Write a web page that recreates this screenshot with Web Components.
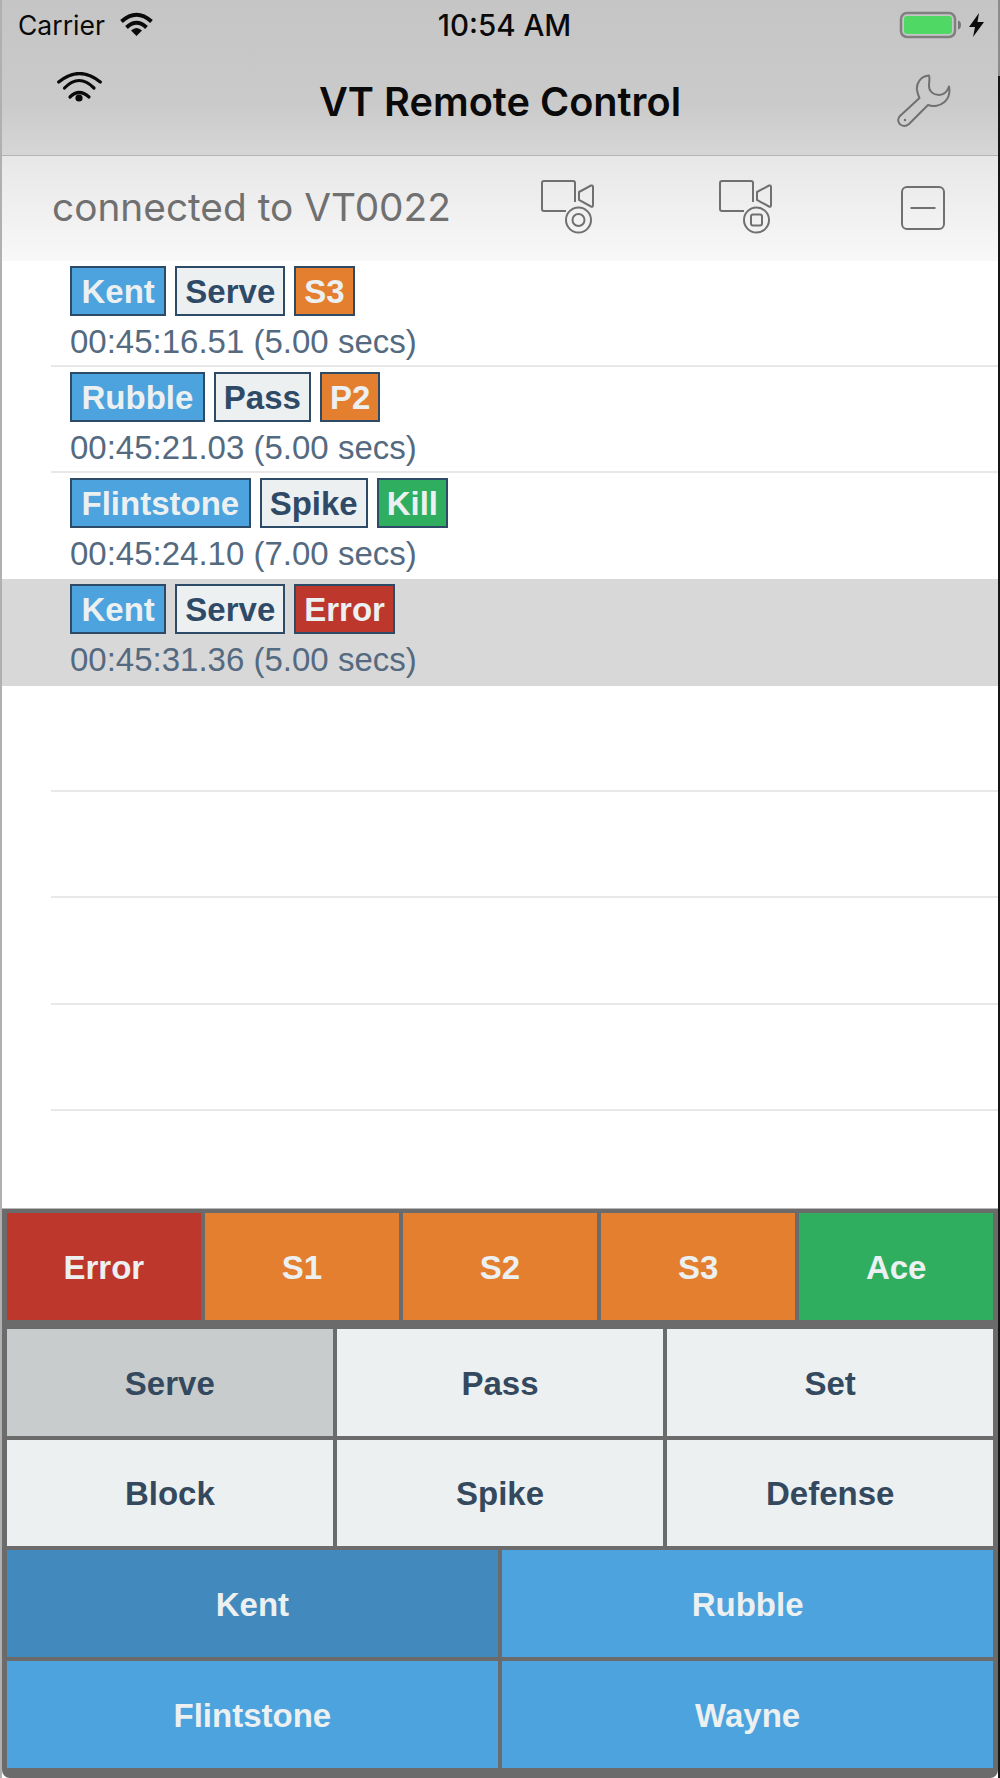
<!DOCTYPE html>
<html>
<head>
<meta charset="utf-8">
<title>VT Remote Control</title>
<style>
	html, body { margin: 0; padding: 0; background: #fff; }
	body { width: 1000px; height: 1778px; overflow: hidden; font-family: "Liberation Sans", sans-serif; }
</style>
</head>
<body>
<vt-app>
	<status-bar slot="top"></status-bar>
	<nav-bar slot="top" title="VT Remote Control"></nav-bar>
	<conn-bar slot="top" label="connected to VT0022"></conn-bar>

	<clip-row slot="list" time="00:45:16.51 (5.00 secs)">
		<tag-chip kind="player">Kent</tag-chip><tag-chip kind="skill">Serve</tag-chip><tag-chip kind="mid">S3</tag-chip>
	</clip-row>
	<clip-row slot="list" time="00:45:21.03 (5.00 secs)">
		<tag-chip kind="player">Rubble</tag-chip><tag-chip kind="skill">Pass</tag-chip><tag-chip kind="mid">P2</tag-chip>
	</clip-row>
	<clip-row slot="list" norule time="00:45:24.10 (7.00 secs)">
		<tag-chip kind="player">Flintstone</tag-chip><tag-chip kind="skill">Spike</tag-chip><tag-chip kind="good">Kill</tag-chip>
	</clip-row>
	<clip-row slot="list" selected norule time="00:45:31.36 (5.00 secs)">
		<tag-chip kind="player">Kent</tag-chip><tag-chip kind="skill">Serve</tag-chip><tag-chip kind="bad">Error</tag-chip>
	</clip-row>
	<clip-row slot="list"></clip-row>
	<clip-row slot="list"></clip-row>
	<clip-row slot="list"></clip-row>
	<clip-row slot="list"></clip-row>

	<key-pad slot="pad">
		<key-row cols="5" class="first">
			<key-button kind="bad">Error</key-button>
			<key-button kind="mid">S1</key-button>
			<key-button kind="mid">S2</key-button>
			<key-button kind="mid">S3</key-button>
			<key-button kind="good">Ace</key-button>
		</key-row>
		<key-row cols="3">
			<key-button kind="skill" active>Serve</key-button>
			<key-button kind="skill">Pass</key-button>
			<key-button kind="skill">Set</key-button>
		</key-row>
		<key-row cols="3">
			<key-button kind="skill">Block</key-button>
			<key-button kind="skill">Spike</key-button>
			<key-button kind="skill">Defense</key-button>
		</key-row>
		<key-row cols="2">
			<key-button kind="player" active>Kent</key-button>
			<key-button kind="player">Rubble</key-button>
		</key-row>
		<key-row cols="2">
			<key-button kind="player">Flintstone</key-button>
			<key-button kind="player">Wayne</key-button>
		</key-row>
	</key-pad>
</vt-app>

<script>
(function () {
	const SF = '"Inter", "Liberation Sans", sans-serif';
	const GREY = '#707070';

	class VtApp extends HTMLElement {
		constructor() {
			super();
			this.attachShadow({ mode: 'open' }).innerHTML = `
      <style>
        :host { display: flex; flex-direction: column; width: 1000px; height: 1778px; box-sizing: border-box; padding: 0 2px;
          background:
            linear-gradient(#8c8c8c 76px, #161616 76px) right top / 2px 100% no-repeat,
            linear-gradient(#b0b0b0, #b0b0b0) left top / 2px 100% no-repeat; }
        .list { flex: 1; min-height: 0; background: #fff; }
      </style>
      <slot name="top"></slot>
      <div class="list"><slot name="list"></slot></div>
      <slot name="pad"></slot>
      `;
		}
	}

	class StatusBar extends HTMLElement {
		constructor() {
			super();
			this.attachShadow({ mode: 'open' }).innerHTML = `
      <style>
        :host { display: grid; grid-template-columns: 1fr auto 1fr; align-items: center; height: 50px; padding: 0 14px 10px 16px;
          background: linear-gradient(#c5c5c5, #c8c8c8); color: #0a0a0a; font-family: ${SF}; }
        .left, .right { display: flex; align-items: center; }
        .right { justify-content: flex-end; }
        .carrier { font-size: 26.5px; }
        .left svg { margin-left: 15px; margin-top: -2px; }
        .time { font-size: 29.5px; font-weight: 500; margin-left: 7px; }
        .bolt { margin-left: 8px; }
      </style>
      <div class="left">
        <span class="carrier">Carrier</span>
        <svg width="33" height="24" viewBox="0 0 33 24">
          <g fill="none" stroke="#0a0a0a" stroke-width="4">
            <path d="M1.500 9.500Q16.500 -4 31.500 9.500"/>
            <path d="M6.500 15.500Q16.500 6 26.500 15.500"/>
          </g>
          <path d="M16.500 24L11 18.500Q16.500 13.500 22 18.500Z" fill="#0a0a0a"/>
        </svg>
      </div>
      <div class="time">10:54 AM</div>
      <div class="right">
        <svg width="62" height="28" viewBox="0 0 62 28">
          <rect x="2" y="2" width="54" height="24" rx="6" fill="none" stroke="#808080" stroke-width="2.500"/>
          <rect x="5" y="5" width="48" height="18" rx="3" fill="#4fd964"/>
          <path d="M59 9.500c2 .5 3 2 3 4.500s-1 4-3 4.500z" fill="#777"/>
        </svg>
        <svg class="bolt" width="15" height="24" viewBox="0 0 15 24">
          <path d="M10 0L0 14H6L4 24L15 9H8.500Z" fill="#0a0a0a"/>
        </svg>
      </div>
      `;
		}
	}

	class NavBar extends HTMLElement {
		constructor() {
			super();
			this.attachShadow({ mode: 'open' }).innerHTML = `
      <style>
        :host { display: grid; grid-template-columns: 1fr auto 1fr; align-items: center; height: 95.500px; box-sizing: border-box; padding: 0 51px;
          background: linear-gradient(#c8c8c8 0%, #cacaca 45%, #d6d6d6 100%); border-bottom: 1px solid #b4b4b4; font-family: ${SF}; }
        .title { font-size: 39.700px; font-weight: 600; color: #0a0a0a; margin-top: -10px; }
        .wifi { margin-top: -41px; margin-left: 4px; }
        .wrench { justify-self: end; margin-top: -13px; margin-right: -4px; }
      </style>
      <svg class="wifi" width="45" height="30" viewBox="0 0 45 30">
        <g fill="none" stroke="#0a0a0a" stroke-width="3.200" stroke-linecap="round">
          <path d="M1.700 10Q22.500 -7 43.300 10"/>
          <path d="M7.500 16Q22 1 37 16"/>
          <path d="M13 25Q22 16 32 25"/>
        </g>
        <circle cx="22" cy="26" r="3.600" fill="#0a0a0a"/>
      </svg>
      <div class="title">${this.getAttribute('title')}</div>
      <svg class="wrench" width="54" height="54" viewBox="0 0 54 54">
        <path d="M32 1.500C24 2 19 9 20 16C20.500 19 21 21 22.500 24L3 42C0 45 1 49 4 51C6.500 52.500 9.500 52 12 50L31 31C36 33 43 32 47.500 28C52 24 53 18 52 12.500C50 18 46 21 42 21C36 21 32 17 32 12C32 8 33 4 32 1.500Z"
          fill="none" stroke="${GREY}" stroke-width="2" stroke-linejoin="round"/>
        <circle cx="8" cy="46" r="1.200" fill="${GREY}"/>
      </svg>
      `;
		}
	}

	class ConnBar extends HTMLElement {
		constructor() {
			super();
			const camera = `<path d="M25 31H3a2 2 0 0 1-2-2V3a2 2 0 0 1 2-2H32a2 2 0 0 1 2 2V22"/>
          <path d="M38 12L50 5.500Q52 5 52 7V25Q52 27.500 50 26.500L38 20Z"/>
          <circle cx="37.500" cy="40" r="12.500"/>`;
			this.attachShadow({ mode: 'open' }).innerHTML = `
      <style>
        :host { display: flex; align-items: center; height: 105px; padding-left: 50px;
          background: linear-gradient(#e7e7e7, #f8f8f8); font-family: ${SF}; }
        .label { font-size: 38.800px; color: #707070; width: 489px; white-space: nowrap; margin-top: -4px; }
        svg { fill: none; stroke: ${GREY}; stroke-width: 2; display: block; flex: none; }
        .rec { margin-top: -2px; }
        .stop { margin-left: 124px; margin-top: -2px; }
        .minus { margin-left: 128px; margin-top: -1px; }
      </style>
      <span class="label">${this.getAttribute('label')}</span>
      <svg class="rec" width="54" height="54" viewBox="0 0 54 54">${camera}<circle cx="37.500" cy="40" r="6"/></svg>
      <svg class="stop" width="54" height="54" viewBox="0 0 54 54">${camera}<rect x="32" y="34.500" width="11" height="11" rx="2"/></svg>
      <svg class="minus" width="44" height="44" viewBox="0 0 44 44">
        <rect x="1" y="1" width="42" height="42" rx="5"/>
        <path d="M9.500 22H34.500"/>
      </svg>
      `;
		}
	}

	class ClipRow extends HTMLElement {
		constructor() {
			super();
			const time = this.getAttribute('time') || '';
			this.attachShadow({ mode: 'open' }).innerHTML = `
      <style>
        :host { display: block; position: relative; height: 106.300px; box-sizing: border-box; padding: 5px 0 0 68px; }
        :host([selected]) { background: #d8d8d8; }
        .chips { display: flex; gap: 9px; }
        .time { font-size: 33px; line-height: 46px; padding-top: 3px; color: #546a80; white-space: nowrap; }
        .rule { position: absolute; left: 49px; right: 0; bottom: 0; height: 2px; background: #e8e8e8; }
        :host([norule]) .rule { display: none; }
      </style>
      <div class="chips"><slot></slot></div>
      <div class="time">${time}</div>
      <div class="rule"></div>
      `;
		}
	}

	class TagChip extends HTMLElement {
		constructor() {
			super();
			this.attachShadow({ mode: 'open' }).innerHTML = `
      <style>
        :host { display: block; height: 50px; box-sizing: border-box; padding: 0 8px; border: 2.500px solid #2d4a66; line-height: 48px;
          font-size: 33px; font-weight: 700; color: #ecf0f1; white-space: nowrap; }
        :host([kind="player"]) { background: #4da3de; padding: 0 9.500px; }
        :host([kind="skill"]) { background: #ecf0f1; color: #2f4a66; }
        :host([kind="mid"]) { background: #e37f2f; }
        :host([kind="good"]) { background: #2fae60; }
        :host([kind="bad"]) { background: #bd372d; }
      </style>
      <slot></slot>
      `;
		}
	}

	class KeyPad extends HTMLElement {
		constructor() {
			super();
			this.attachShadow({ mode: 'open' }).innerHTML = `
      <style>
        :host { display: flex; flex-direction: column; gap: 4px; height: 570px; box-sizing: border-box; padding: 4px 5px 10px 5px;
          background: #6b6b6b; border-radius: 0 0 8px 8px; border-top: 1px solid #b8b8b8; }
      </style>
      <slot></slot>
      `;
		}
	}

	class KeyRow extends HTMLElement {
		constructor() {
			super();
			const cols = this.getAttribute('cols');
			this.attachShadow({ mode: 'open' }).innerHTML = `
      <style>
        :host { display: grid; grid-template-columns: repeat(${cols}, 1fr); gap: 4.500px; flex: 1; min-height: 0; }
        :host(.first) { margin-bottom: 5px; }
      </style>
      <slot></slot>
      `;
		}
	}

	class KeyButton extends HTMLElement {
		constructor() {
			super();
			this.attachShadow({ mode: 'open' }).innerHTML = `
      <style>
        :host { display: flex; align-items: center; justify-content: center; padding-top: 3px; box-sizing: border-box;
          font-size: 33px; font-weight: 700; color: #ecf0f1; }
        :host([kind="player"]) { background: #4da3de; }
        :host([kind="player"][active]) { background: #4289bd; }
        :host([kind="skill"]) { background: #ecf0f1; color: #34495e; }
        :host([kind="skill"][active]) { background: #c8cccd; }
        :host([kind="mid"]) { background: #e37f2f; }
        :host([kind="good"]) { background: #2fae60; }
        :host([kind="bad"]) { background: #bd372d; }
      </style>
      <slot></slot>
      `;
		}
	}

	window.customElements.define('vt-app', VtApp);
	window.customElements.define('status-bar', StatusBar);
	window.customElements.define('nav-bar', NavBar);
	window.customElements.define('conn-bar', ConnBar);
	window.customElements.define('clip-row', ClipRow);
	window.customElements.define('tag-chip', TagChip);
	window.customElements.define('key-pad', KeyPad);
	window.customElements.define('key-row', KeyRow);
	window.customElements.define('key-button', KeyButton);
})();
</script>
</body>
</html>
